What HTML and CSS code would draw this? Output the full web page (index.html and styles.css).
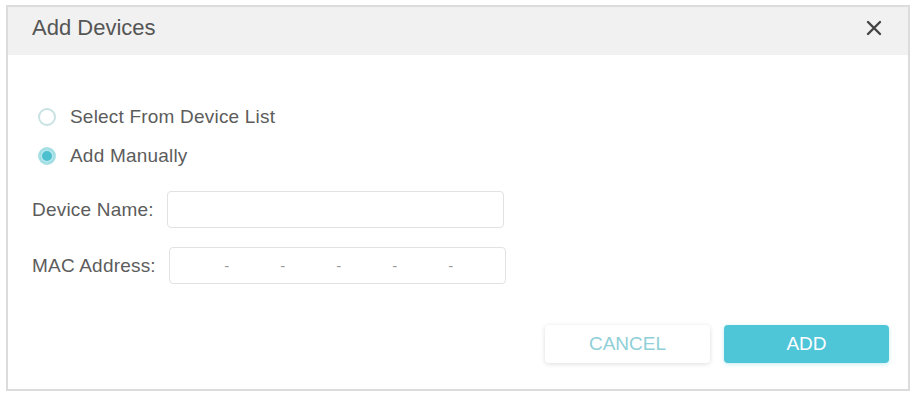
FILE: index.html
```html
<!DOCTYPE html>
<html lang="en">
<head>
  <meta charset="UTF-8">
  <title>Add Devices</title>
  <link rel="stylesheet" href="styles.css">
</head>
<body>
  <div class="dialog">
    <div class="dialog-head">
      <h2>Add Devices</h2>
      <button class="close" aria-label="Close">
        <svg viewBox="0 0 16 16" width="16" height="16">
          <path d="M2 2 L14 14 M14 2 L2 14" stroke="#444" stroke-width="2.4" stroke-linecap="round" fill="none"/>
        </svg>
      </button>
    </div>

    <div class="dialog-body">
      <label class="radio-row">
        <span class="radio"></span>
        Select From Device List
      </label>
      <label class="radio-row">
        <span class="radio checked"></span>
        Add Manually
      </label>

      <div class="field">
        <span class="field-label">Device Name:</span>
        <input class="text-input" type="text">
      </div>
      <div class="field">
        <span class="field-label">MAC Address:</span>
        <div class="text-input mac">
          <input type="text"><span class="dash">-</span>
          <input type="text"><span class="dash">-</span>
          <input type="text"><span class="dash">-</span>
          <input type="text"><span class="dash">-</span>
          <input type="text"><span class="dash">-</span>
          <input type="text" class="last">
        </div>
      </div>

      <div class="actions">
        <button class="btn btn-cancel">CANCEL</button>
        <button class="btn btn-add">ADD</button>
      </div>
    </div>
  </div>
</body>
</html>
```

FILE: styles.css
```css
* {
  margin: 0;
  padding: 0;
  box-sizing: border-box;
  font-family: "Liberation Sans", Arial, sans-serif;
}

body {
  background-color: #ffffff;
  padding: 5px 5px 4px 6px;
}

.dialog {
  width: 904px;
  height: 386px;
  border: 2px solid #dcdcdc;
  background-color: #ffffff;
}

.dialog-head {
  height: 48px;
  background-color: #f1f1f1;
  display: flex;
  align-items: center;
  justify-content: space-between;
  padding: 0 26px 7px 24px;
}

.dialog-head h2 {
  font-size: 22px;
  font-weight: normal;
  color: #555555;
}

.close {
  border: none;
  background: none;
  width: 16px;
  height: 16px;
  display: flex;
}

.dialog-body {
  padding: 42px 19px 0 24px;
  color: #5c5c5c;
  font-size: 19px;
  letter-spacing: 0.2px;
}

.radio-row {
  display: flex;
  align-items: center;
  gap: 14px;
  height: 39px;
  padding-left: 6px;
}

.radio {
  width: 18px;
  height: 18px;
  border-radius: 50%;
  border: 2px solid #c9e2e4;
  background-color: #ffffff;
}

.radio.checked {
  border-color: #a9e0e6;
  background-color: #4cc0ce;
  box-shadow: inset 0 0 0 2px #b6e7ec;
}

.field {
  display: flex;
  align-items: center;
  gap: 13px;
  margin-top: 19px;
}

.radio-row + .field {
  margin-top: 16px;
}

.field-label {
  white-space: nowrap;
}

.text-input {
  width: 337px;
  height: 37px;
  border: 1px solid #e2e2e2;
  border-radius: 4px;
  background-color: #ffffff;
  outline: none;
  font-size: 16px;
}

.mac {
  display: flex;
  align-items: center;
  padding-left: 4px;
}

.mac input {
  width: 50px;
  height: 100%;
  border: none;
  outline: none;
  background: transparent;
}

.mac input.last {
  flex: 1;
  min-width: 0;
}

.dash {
  font-size: 15px;
  color: #9a9a9a;
  width: 6px;
  text-align: center;
}

.actions {
  display: flex;
  justify-content: flex-end;
  gap: 14px;
  margin-top: 41px;
}

.btn {
  width: 165px;
  height: 38px;
  border: none;
  border-radius: 4px;
  font-size: 19px;
  cursor: pointer;
}

.btn-cancel {
  background-color: #ffffff;
  color: #8fcfd7;
  box-shadow: 0 1px 5px rgba(0, 0, 0, 0.14);
}

.btn-add {
  background-color: #4fc5d8;
  color: #ffffff;
  box-shadow: 0 1px 4px rgba(79, 197, 216, 0.35);
}
```
